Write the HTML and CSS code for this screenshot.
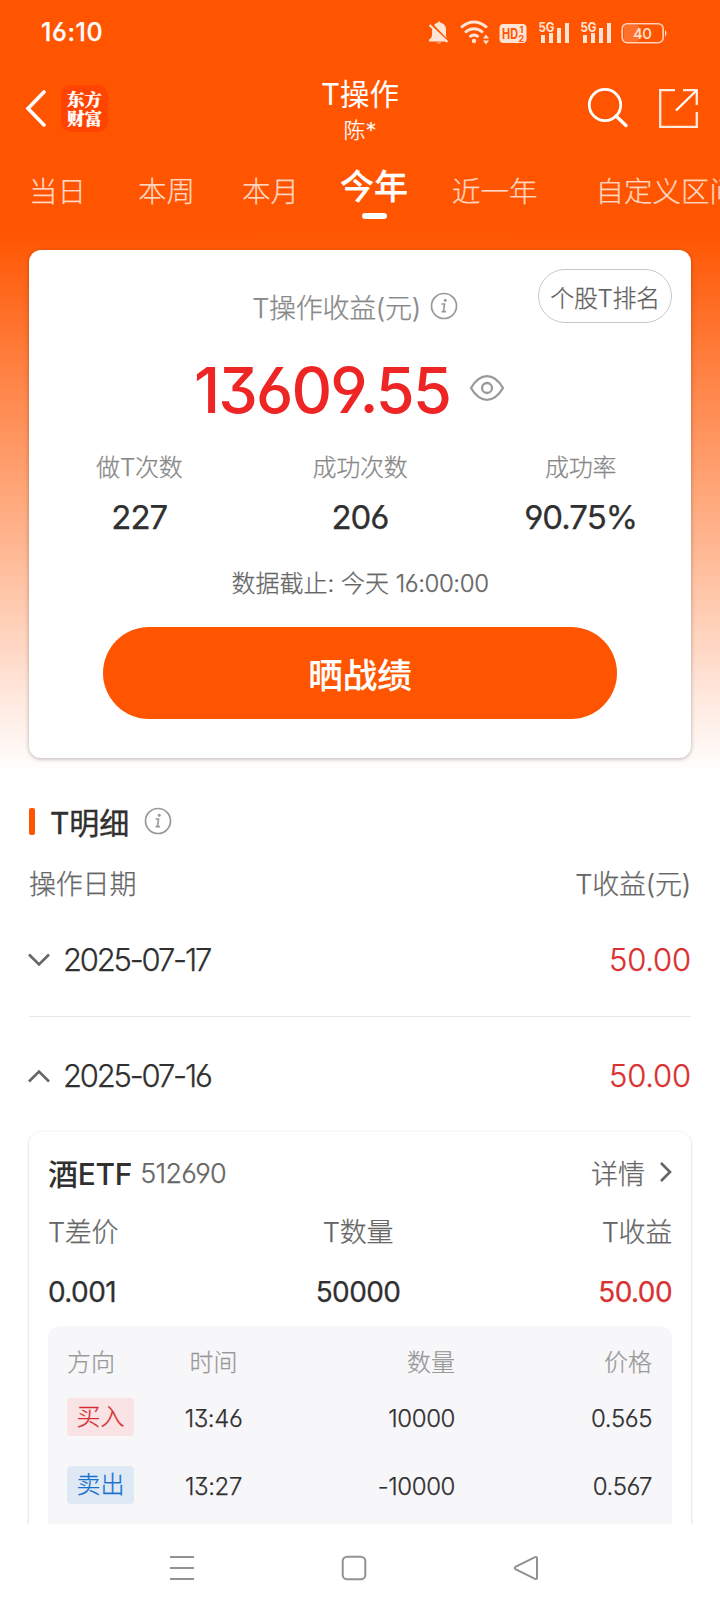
FILE: index.html
```html
<!DOCTYPE html>
<html lang="zh-CN">
<head>
<meta charset="utf-8">
<title>T操作</title>
<link rel="stylesheet" href="styles.css">
</head>
<body>
<div class="screen">
  <div class="status">
    <span class="clock">16:10</span>
    <svg class="status-icons" width="244" height="32" viewBox="0 0 244 32" fill="#ffe3d5">
      <path d="M3 25.500v-2q3-1.500 3-5v-7l15 14zM8 9q1.500-2 4-2.500 1-3 2 0 5 1 6 6v7q0 2 1.500 3.500z"/>
      <path d="M3.500 9l18 17" stroke="#ffe3d5" stroke-width="2.200"/>
      <path d="M10.500 26.500h5q-2.500 2-5 0z"/>
      <g fill="none" stroke="#ffe3d5" stroke-width="2.800"><path d="M35 11.500q13-11 26 0M39 16.500q9-7.500 18 0M43.500 21q4.500-4 9 0"/></g>
      <circle cx="48" cy="25" r="2.200"/>
      <path d="M57 22.500l3-4 3 4zM57 24.500l3 4 3-4z"/>
      <rect x="73.500" y="8" width="27" height="19" rx="4"/>
      <g class="hd"><text x="76" y="22.500" font-size="14" textLength="16" lengthAdjust="spacingAndGlyphs">HD</text><text x="93.500" y="16.500" font-size="9">1</text><text x="92.500" y="25.500" font-size="9">2</text></g>
      <g class="five-g"><text x="112.500" y="15.500" font-size="13" textLength="16" lengthAdjust="spacingAndGlyphs">5G</text><text x="154.500" y="15.500" font-size="13" textLength="16" lengthAdjust="spacingAndGlyphs">5G</text></g>
      <path d="M115 19h4v8h-4zM123 17h4v10h-4zM131 12h4v15h-4zM139 7h4v20h-4zM157 19h4v8h-4zM165 17h4v10h-4zM173 12h4v15h-4zM181 7h4v20h-4z"/>
      <rect x="198" y="9" width="15" height="17" rx="3" opacity=".2"/>
      <rect x="196.200" y="7.700" width="41" height="19" rx="5" fill="none" stroke="#ffd0b8" stroke-width="1.600"/>
      <path d="M239 14q3 3 0 7z"/>
      <text class="battery" x="207" y="22.500" font-size="15" textLength="19">40</text>
    </svg>
  </div>

  <header class="header">
    <div class="header-side">
      <svg width="22" height="38" viewBox="0 0 22 38" fill="none" stroke="#fff" stroke-width="3.600"><path d="M19 3L3 19.500 19 36" stroke-linecap="round"/></svg>
      <div class="logo"><span>东方</span><span>财富</span></div>
    </div>
    <div class="heading">
      <h1>T操作</h1>
      <p>陈*</p>
    </div>
    <div class="header-side actions">
      <svg width="42" height="42" viewBox="0 0 42 42" fill="none" stroke="#fff"><circle cx="18" cy="18" r="15.700" stroke-width="2.800"/><path d="M29 29l10 9.500" stroke-width="3.400" stroke-linecap="round"/></svg>
      <svg width="40" height="40" viewBox="0 0 40 40" fill="none" stroke="#ffeadd" stroke-width="2.300"><path d="M17 2.200H2.200v36.600h36.600V24M25 2.200h13.800V17"/><path d="M38.500 2.500L18 22.500" stroke="#fff"/></svg>
    </div>
  </header>

  <nav class="tabs">
    <span>当日</span><span>本周</span><span>本月</span><span class="active">今年</span><span>近一年</span><span>自定义区间</span>
  </nav>

  <section class="card summary">
    <div class="summary-top">
      <div class="summary-label">T操作收益(元)
        <svg class="info" width="28" height="28" viewBox="0 0 28 28"><circle cx="14" cy="14" r="12.500"/><path d="M11.500 12h3l-1 7.500M11.500 19.700h4.500"/><circle class="dot" cx="15.200" cy="8.300" r="1.500"/></svg>
      </div>
      <button class="rank">个股T排名</button>
    </div>
    <div class="total">
      <strong>13609.55</strong>
      <svg width="36" height="28" viewBox="0 0 36 28" fill="none" stroke="#999" stroke-width="2.300"><path d="M2 14Q9 2.200 18 2.200T34 14Q27 25.800 18 25.800T2 14z"/><circle cx="18" cy="14" r="5"/></svg>
    </div>
    <div class="stats">
      <div><label>做T次数</label><b>227</b></div>
      <div><label>成功次数</label><b>206</b></div>
      <div><label>成功率</label><b>90.75%</b></div>
    </div>
    <p class="asof">数据截止: 今天 <span>16:00:00</span></p>
    <button class="share">晒战绩</button>
  </section>

  <section class="details">
    <h2>T明细
      <svg class="info" width="28" height="28" viewBox="0 0 28 28"><circle cx="14" cy="14" r="12.500"/><path d="M11.500 12h3l-1 7.500M11.500 19.700h4.500"/><circle class="dot" cx="15.200" cy="8.300" r="1.500"/></svg>
    </h2>
    <div class="list-head"><span>操作日期</span><span>T收益(元)</span></div>
    <div class="day first">
      <svg width="22" height="14" viewBox="0 0 22 14"><path d="M1 1.500l10 10 10-10"/></svg>
      <span>2025-07-17</span><em>50.00</em>
    </div>
    <div class="day">
      <svg width="22" height="14" viewBox="0 0 22 14"><path d="M1 12.500l10-10 10 10"/></svg>
      <span>2025-07-16</span><em>50.00</em>
    </div>

    <article class="card trade">
      <div class="trade-title">
        <h3>酒ETF</h3><span class="code">512690</span>
        <span class="more">详情 <svg width="12" height="20" viewBox="0 0 12 20"><path d="M1 1l9 9-9 9"/></svg></span>
      </div>
      <div class="triple labels"><span>T差价</span><span>T数量</span><span>T收益</span></div>
      <div class="triple values"><span>0.001</span><span>50000</span><span class="red">50.00</span></div>
      <div class="orders">
        <div class="order order-head"><span>方向</span><span>时间</span><span>数量</span><span>价格</span></div>
        <div class="order"><span><i class="buy">买入</i></span><span>13:46</span><span>10000</span><span>0.565</span></div>
        <div class="order"><span><i class="sell">卖出</i></span><span>13:27</span><span>-10000</span><span>0.567</span></div>
      </div>
    </article>
  </section>

  <footer class="sysnav">
    <svg width="26" height="26" viewBox="0 0 26 26"><path d="M1 2h24M1 13h24M1 24h24"/></svg>
    <svg width="26" height="26" viewBox="0 0 26 26"><rect x="1.700" y="1.700" width="22.600" height="22.600" rx="4.500"/></svg>
    <svg width="26" height="26" viewBox="0 0 26 26"><path d="M22 2.200Q24 1.200 24 3.500v19q0 2.300-2 1.300L2.500 14.200q-1.500-1.200 0-2.400z"/></svg>
  </footer>
</div>
</body>
</html>
```

FILE: styles.css
```css
* { box-sizing: border-box; margin: 0; padding: 0; }
body {
  font-family: Inter, "Noto Sans CJK SC", sans-serif;
  font-weight: 300;
  -webkit-text-stroke: .250px;
  font-feature-settings: "cv03", "cv04", "cv09";
  background: #fff;
  color: #303030;
}
button { font: inherit; font-feature-settings: inherit; }
svg { display: block; flex: none; }
em, i { font-style: normal; }

.screen {
  width: 720px;
  height: 1612px;
  overflow: hidden;
  display: flex;
  flex-direction: column;
  background: linear-gradient(#ff5500 230px, #ff8a50 400px, #ffb893 550px, #ffe9df 700px, #fff 775px);
}

.status {
  height: 64px;
  padding: 0 50px 0 41px;
  display: flex;
  justify-content: space-between;
  align-items: center;
  color: #fff;
}
.status-icons { -webkit-text-stroke: 0; }
.clock { font-size: 25px; font-weight: 500; line-height: 32px; letter-spacing: .600px; }
.hd text { font-weight: 700; fill: #ff5500; }
.five-g text { font-weight: 700; }
.battery { font-weight: 500; }

.header {
  height: 90px;
  display: grid;
  grid-template-columns: 1fr auto 1fr;
  padding: 0 22px 0 25px;
  color: #fff;
}
.header-side { display: flex; align-items: center; gap: 14px; height: 88px; }
.actions { justify-content: flex-end; gap: 29px; }
.logo {
  width: 47px;
  height: 47px;
  border-radius: 10px;
  background: #ff4300;
  display: flex;
  flex-direction: column;
  justify-content: center;
  align-items: center;
  font: 900 17.500px/19.500px "Noto Serif CJK SC", "Noto Sans CJK SC", sans-serif;
}
.heading { text-align: center; }
.heading h1 { font-size: 29.500px; font-weight: 400; line-height: 40px; margin: 10px 3px 0 0; -webkit-text-stroke: 0; }
.heading p { font-size: 22px; line-height: 30px; padding: 1px 3px 0 0; }

.tabs {
  height: 96px;
  padding-left: 29px;
  display: flex;
  align-items: flex-start;
  white-space: nowrap;
  color: #ffd6c1;
  font-size: 28.500px;
  line-height: 76px;
}
.tabs span { margin-right: 52px; flex: none; }
.tabs span:nth-child(2) { margin-right: 47px; }
.tabs span:nth-child(3) { margin-right: 41px; }
.tabs .active {
  color: #fff;
  font-size: 34px;
  font-weight: 500;
  line-height: 66px;
  margin-right: 44px;
}
.tabs .active::after {
  content: "";
  display: block;
  width: 25px;
  height: 6px;
  margin: -7px auto 0;
  border-radius: 3px;
  background: #fff;
}
.tabs span:nth-child(5) { margin-right: 58px; }

.card {
  background: #fff;
  border-radius: 12px;
  box-shadow: 0 1px 4px rgba(0, 0, 0, .28);
}
.summary { margin: 0 29px; height: 508px; flex: none; }
.summary-top {
  display: grid;
  grid-template-columns: 1fr auto 1fr;
  height: 100px;
  padding-top: 19px;
}
.summary-label {
  grid-column: 2;
  display: flex;
  gap: 9px;
  align-items: center;
  height: 74px;
  padding-right: 10px;
  font-size: 27px;
  letter-spacing: -.300px;
  color: #888;
}
.info { fill: none; stroke: #999; stroke-width: 1.700; }
.info .dot { fill: #999; stroke: none; }
.rank {
  justify-self: end;
  width: 134px;
  height: 54px;
  margin-right: 19px;
  border: 1px solid #c8c8c8;
  border-radius: 27px;
  background: #fff;
  color: #606060;
  font-size: 24px;
  letter-spacing: -.400px;
  white-space: nowrap;
}
.total { display: flex; height: 76px; align-items: center; padding-left: 165px; gap: 19px; }
.total strong { font-size: 63px; font-weight: 500; letter-spacing: -1.900px; color: #ee2525; padding-top: 3px; -webkit-text-stroke: 0; }
.stats { display: grid; grid-template-columns: repeat(3, 1fr); margin-top: 26px; text-align: center; }
.stats label { display: block; font-size: 24px; line-height: 32px; color: #888; letter-spacing: -.200px; }
.stats b { display: block; font-size: 33px; font-weight: 400; line-height: 66px; letter-spacing: -1px; }
.asof { text-align: center; font-size: 24px; line-height: 32px; margin-top: 18px; color: #666; }
.asof span { letter-spacing: -.400px; }
.share {
  display: block;
  width: 514px;
  height: 92px;
  margin: 27px auto 0;
  border: 0;
  border-radius: 46px;
  background: #ff5500;
  color: #fff;
  font-size: 34.500px;
  font-weight: 500;
}

.details { flex: 1; min-height: 0; overflow: hidden; padding: 42px 29px 0; }
h2 { display: flex; align-items: center; height: 42px; font-size: 30px; font-weight: 400; -webkit-text-stroke: .400px; }
h2::before { content: ""; width: 6px; height: 27px; border-radius: 2px; background: #ff5500; margin-right: 15px; }
h2 .info { margin-left: 15px; }
.list-head { display: flex; justify-content: space-between; font-size: 27px; line-height: 40px; margin-top: 23px; color: #666; letter-spacing: -.200px; }
.day { display: flex; align-items: center; height: 115px; padding-top: 2px; font-size: 31px; }
.day.first { height: 112px; padding: 0 0 2px; border-bottom: 1px solid #e8e8e8; }
.day svg { margin-left: -1px; fill: none; stroke: #666; stroke-width: 2.600; }
.day span { margin-left: 13px; letter-spacing: -2.200px; }
.day em { margin-left: auto; letter-spacing: -.200px; color: #d83232; }

.trade { height: 500px; padding: 13px 19px 0; box-shadow: 0 1px 3px rgba(0, 0, 0, .22); }
.trade-title { display: flex; align-items: center; height: 54px; }
h3 { font-size: 30px; font-weight: 500; letter-spacing: -.300px; -webkit-text-stroke: 0; }
.code { margin: 2px 0 0 8px; font-size: 27px; color: #666; letter-spacing: -.700px; }
.more { display: flex; align-items: center; gap: 15px; margin-left: auto; font-size: 27px; color: #666; }
.more svg { fill: none; stroke: #666; stroke-width: 2.600; }
.triple { display: grid; grid-template-columns: 1fr 1fr 1fr; line-height: 60px; }
.triple span:nth-child(2) { text-align: center; padding-right: 4px; }
.triple span:nth-child(3) { text-align: right; }
.labels { font-size: 27px; color: #666; padding-top: 4px; letter-spacing: -.300px; }
.values { font-size: 28px; font-weight: 400; letter-spacing: -.600px; line-height: 58px; }
.red { color: #d83232; }
.orders { margin-top: 5px; height: 300px; border-radius: 12px; background: #f7f7fa; padding: 11px 20px 0 19px; }
.order { display: grid; grid-template-columns: 103px 87px 198px 1fr; align-items: center; height: 68px; font-size: 24px; text-align: right; letter-spacing: -.400px; }
.order span:nth-child(1) { text-align: left; }
.order span:nth-child(2) { text-align: center; white-space: nowrap; }
.order-head { height: 47px; padding-bottom: 0; color: #999; letter-spacing: 0; }
.order i { display: block; width: 67px; height: 38px; margin-bottom: 2px; border-radius: 4px; text-align: center; line-height: 38px; font-size: 24px; letter-spacing: 0; }
.buy { color: #d62e33; background: #f9e3e4; }
.sell { color: #1771cc; background: #dfe9f6; }

.sysnav { flex: none; height: 88px; background: #fff; display: flex; align-items: center; gap: 146px; padding-left: 169px; }
.sysnav svg { fill: none; stroke: #929292; stroke-width: 2; }
```
